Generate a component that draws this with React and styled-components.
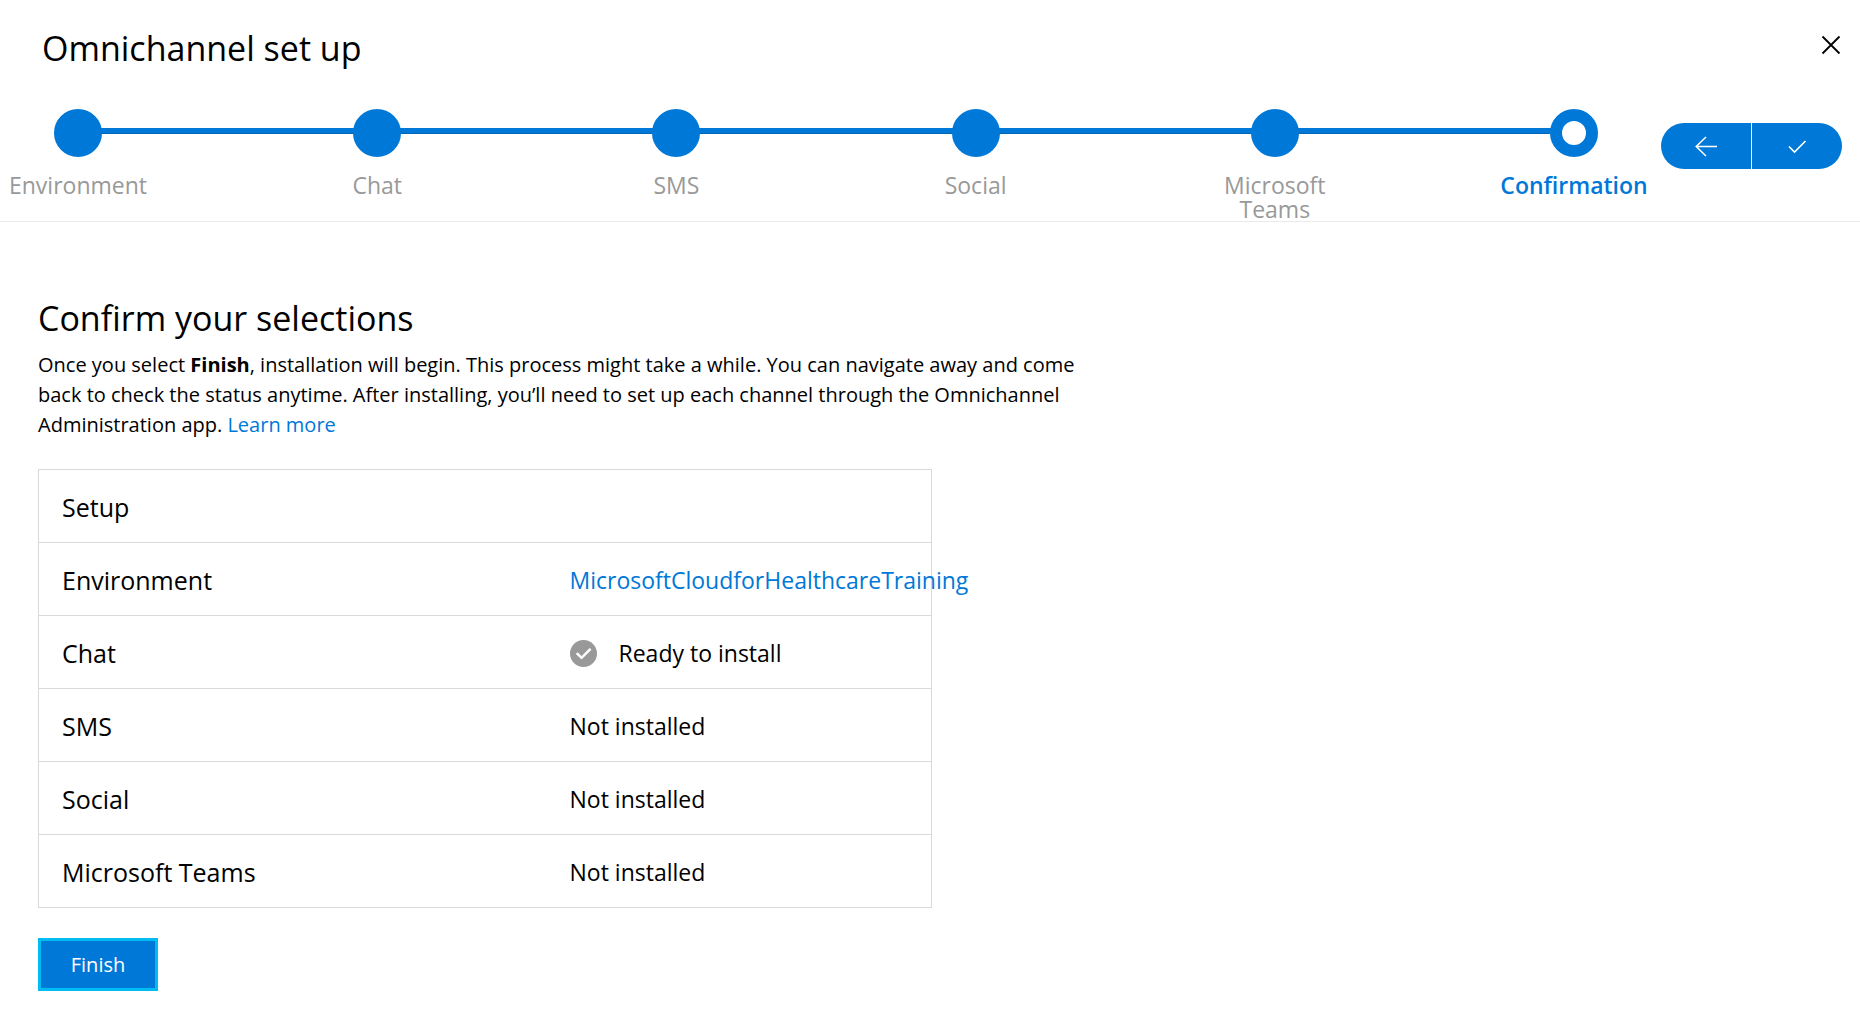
import React from "react";
import styled, { createGlobalStyle } from "styled-components";

const GlobalStyle = createGlobalStyle`
  *, *::before, *::after { box-sizing: border-box; }
  body {
    margin: 0;
    background: #ffffff;
    color: #000000;
    font-family: "Segoe UI", "Open Sans", "Noto Sans", sans-serif;
  }
  h1, h2, p, ol { margin: 0; padding: 0; font-weight: 400; }
  button { font: inherit; border: 0; cursor: pointer; }
`;

const BLUE = "#0078d7";

const Header = styled.header`
  border-bottom: 1px solid #eaeaea;
`;

const TitleBar = styled.div`
  display: flex;
  justify-content: space-between;
  align-items: flex-start;
  padding: 24px 16px 37px 42px;
`;

const Title = styled.h1`
  font-size: 34px;
  line-height: 48px;
`;

const CloseButton = styled.button`
  display: flex;
  margin-top: 8px;
  padding: 2px;
  background: transparent;
  color: #000000;
`;

const Progress = styled.div`
  display: flex;
  align-items: flex-start;
  gap: 9px;
  padding-right: 18px;
`;

const Steps = styled.ol`
  display: flex;
  flex: 1;
  list-style: none;
`;

const Step = styled.li`
  display: flex;
  flex-direction: column;
  align-items: center;
  gap: 16px;
  width: 156px;
  flex-shrink: 0;
  font-size: 23px;
  line-height: 24px;
  text-align: center;
  font-weight: ${(p) => (p.$current ? 600 : 400)};
  color: ${(p) => (p.$current ? BLUE : "#999999")};
`;

const Dot = styled.span`
  width: 48px;
  height: 48px;
  border-radius: 50%;
  border: 12px solid ${BLUE};
  background: ${(p) => (p.$current ? "#ffffff" : BLUE)};
`;

const Connector = styled.li`
  flex: 1;
  height: 6px;
  margin: 19px -55px 0;
  background: ${BLUE};
  border-bottom: 1px solid #0067b8;
`;

const Pill = styled.div`
  display: flex;
  gap: 1px;
  margin-top: 14px;
  border-radius: 23px;
  overflow: hidden;
`;

const PillButton = styled.button`
  display: flex;
  align-items: center;
  justify-content: center;
  width: 90px;
  height: 46px;
  padding: 0;
  background: ${BLUE};
  color: #ffffff;
`;

const Main = styled.main`
  padding: 72px 38px 36px;
`;

const Heading = styled.h2`
  font-size: 34px;
  line-height: 48px;
`;

const Intro = styled.p`
  max-width: 1040px;
  margin-top: 8px;
  font-size: 20px;
  line-height: 30px;
`;

const Link = styled.a`
  color: ${BLUE};
  text-decoration: none;
`;

const Summary = styled.table`
  width: 100%;
  max-width: 894px;
  margin-top: 29px;
  table-layout: fixed;
  border-collapse: collapse;
`;

const Row = styled.tr`
  height: 73px;
  border: 1px solid #d9d9d9;
`;

const Label = styled.th`
  width: 508px;
  padding: 2px 23px 0;
  font-size: 25px;
  line-height: 36px;
  font-weight: 400;
  text-align: left;
`;

const Value = styled.td`
  padding: 2px 23px 0;
  font-size: 23px;
  line-height: 36px;
  white-space: nowrap;
`;

const Status = styled.span`
  display: flex;
  align-items: center;
  gap: 22px;
`;

const FinishButton = styled.button`
  display: block;
  width: 120px;
  height: 53px;
  margin-top: 30px;
  border: 3px solid #00bcf2;
  background: ${BLUE};
  color: #ffffff;
  font-size: 20px;
`;

const CloseIcon = () => (
  <svg width="22" height="22" viewBox="0 0 22 22" fill="none" stroke="currentColor" strokeWidth="1.8" aria-hidden="true">
    <path d="M2.5 2.5 19.5 19.5M19.5 2.5 2.5 19.5" />
  </svg>
);

const BackIcon = () => (
  <svg width="24" height="24" viewBox="0 0 24 24" fill="none" stroke="currentColor" strokeWidth="1.5" aria-hidden="true">
    <path d="M23 12.5H2M12 3 2.2 12.5 12 22" />
  </svg>
);

const CheckIcon = () => (
  <svg width="20" height="20" viewBox="0 0 20 20" fill="none" stroke="currentColor" strokeWidth="1.6" aria-hidden="true">
    <path d="M2 10.5 7.5 16 18.5 5" />
  </svg>
);

const ReadyIcon = () => (
  <svg width="27" height="27" viewBox="0 0 28 28" fill="none" aria-hidden="true">
    <circle cx="14" cy="14" r="14" fill="#999999" />
    <path d="M7 13.5 12 18.5 21.3 9.2" stroke="#ffffff" strokeWidth="2.6" />
  </svg>
);

const steps = ["Environment", "Chat", "SMS", "Social", "Microsoft Teams", "Confirmation"];

const channels = [
  { name: "Chat", ready: true },
  { name: "SMS" },
  { name: "Social" },
  { name: "Microsoft Teams" },
];

export default function App() {
  const last = steps.length - 1;
  return (
    <>
      <GlobalStyle />
      <Header>
        <TitleBar>
          <Title>Omnichannel set up</Title>
          <CloseButton type="button" aria-label="Close">
            <CloseIcon />
          </CloseButton>
        </TitleBar>
        <Progress>
          <Steps>
            {steps.map((name, i) => (
              <React.Fragment key={name}>
                {i > 0 && <Connector aria-hidden="true" />}
                <Step $current={i === last} aria-current={i === last ? "step" : undefined}>
                  <Dot $current={i === last} />
                  {name}
                </Step>
              </React.Fragment>
            ))}
          </Steps>
          <Pill>
            <PillButton type="button" aria-label="Back">
              <BackIcon />
            </PillButton>
            <PillButton type="button" aria-label="Done">
              <CheckIcon />
            </PillButton>
          </Pill>
        </Progress>
      </Header>
      <Main>
        <Heading>Confirm your selections</Heading>
        <Intro>
          Once you select <strong>Finish</strong>, installation will begin. This process might take a while. You can
          navigate away and come back to check the status anytime. After installing, you’ll need to set up each channel
          through the Omnichannel Administration app. <Link href="#learn-more">Learn more</Link>
        </Intro>
        <Summary>
          <thead>
            <Row>
              <Label scope="col">Setup</Label>
              <Value />
            </Row>
          </thead>
          <tbody>
            <Row>
              <Label scope="row">Environment</Label>
              <Value>
                <Link href="#environment">MicrosoftCloudforHealthcareTraining</Link>
              </Value>
            </Row>
            {channels.map(({ name, ready }) => (
              <Row key={name}>
                <Label scope="row">{name}</Label>
                <Value>
                  {ready ? (
                    <Status>
                      <ReadyIcon />
                      Ready to install
                    </Status>
                  ) : (
                    "Not installed"
                  )}
                </Value>
              </Row>
            ))}
          </tbody>
        </Summary>
        <FinishButton type="button">Finish</FinishButton>
      </Main>
    </>
  );
}
